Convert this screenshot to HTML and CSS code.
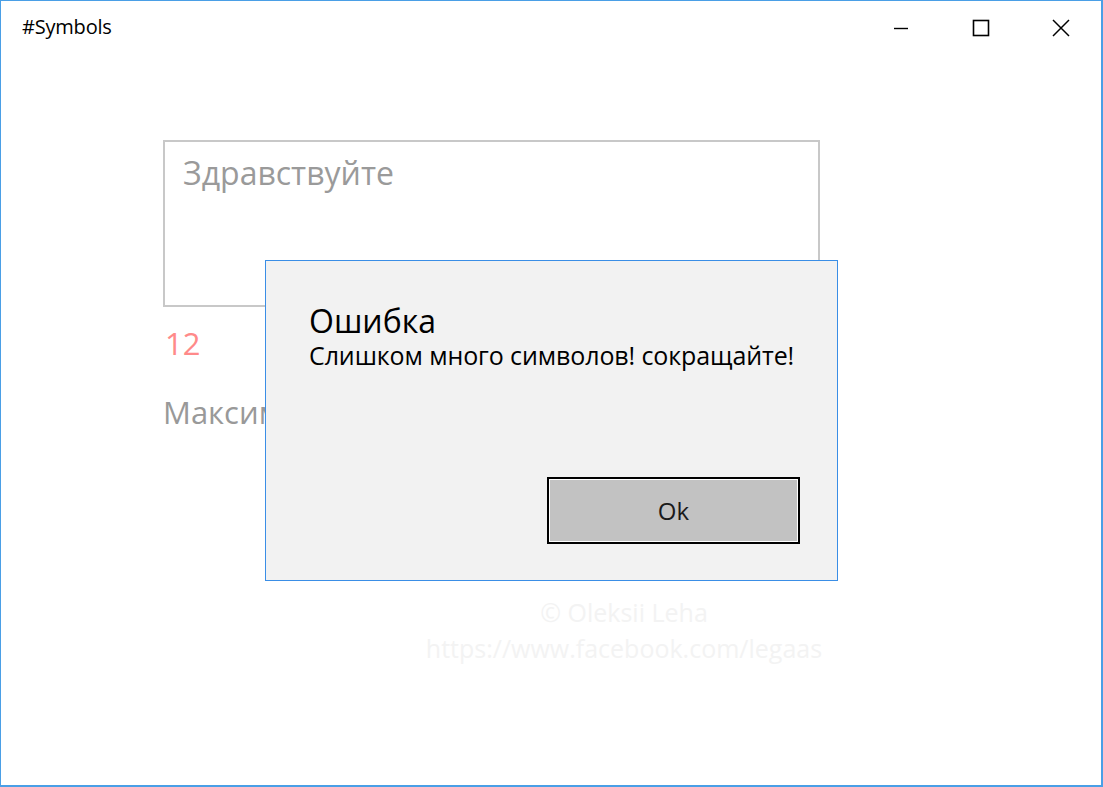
FILE: index.html
```html
<!DOCTYPE html>
<html lang="ru">
<head>
    <meta charset="UTF-8">
    <title>#Symbols</title>
    <link rel="stylesheet" href="styles.css">
</head>
<body>
    <div class="window">
        <!-- Заголовок окна -->
        <div class="titlebar">
            <span class="title">#Symbols</span>
            <div class="controls">
                <span class="ctl">
                    <svg width="16" height="16" viewBox="0 0 16 16"><path d="M1 8.5h14" stroke="#000" stroke-width="1.4" fill="none"/></svg>
                </span>
                <span class="ctl">
                    <svg width="18" height="18" viewBox="0 0 18 18"><rect x="1.5" y="1.5" width="15" height="15" stroke="#000" stroke-width="1.6" fill="none"/></svg>
                </span>
                <span class="ctl">
                    <svg width="18" height="18" viewBox="0 0 18 18"><path d="M1 1L17 17M17 1L1 17" stroke="#000" stroke-width="1.5" fill="none"/></svg>
                </span>
            </div>
        </div>

        <!-- Содержимое -->
        <div class="content">
            <div class="textbox">Здравствуйте</div>
            <div class="counter">12</div>
            <div class="max">Максимум 10 символов</div>
            <div class="credit">
                <div>© Oleksii Leha</div>
                <div>https://www.facebook.com/legaas</div>
            </div>
        </div>

        <!-- Диалог ошибки -->
        <div class="dialog">
            <div class="dlg-title">Ошибка</div>
            <div class="dlg-text">Слишком много символов! сокращайте!</div>
            <div class="dlg-actions">
                <button class="btn">Ok</button>
            </div>
        </div>
    </div>
</body>
</html>
```

FILE: styles.css
```css
html, body {
    margin: 0;
    padding: 0;
    background: #fff;
}
body {
    font-family: "Open Sans", "Noto Sans", sans-serif;
}
.window {
    position: relative;
    width: 1103px;
    height: 787px;
    box-sizing: border-box;
    border: 2px solid #4a9fe6;
    border-top-width: 1px;
    border-left-width: 1px;
    background: #fff;
    overflow: hidden;
}
.titlebar {
    height: 56px;
    display: flex;
    justify-content: space-between;
    align-items: flex-start;
}
.title {
    font-size: 20px;
    color: #000;
    margin: 12px 0 0 21px;
    letter-spacing: -0.2px;
}
.controls {
    display: flex;
}
.ctl {
    width: 80px;
    height: 56px;
    display: flex;
    align-items: center;
    justify-content: center;
}
.ctl svg {
    display: block;
    margin-top: -2px;
}
.content {
    padding: 83px 0 0 162px;
}
.textbox {
    width: 657px;
    height: 167px;
    box-sizing: border-box;
    border: 2px solid #c8c8c8;
    padding: 0 0 0 18px;
    font-size: 32px;
    color: #9a9a9a;
    line-height: 62px;
}
.counter {
    font-size: 31px;
    color: #ff8a8a;
    margin: 16px 0 0 2px;
    line-height: 40px;
}
.max {
    font-size: 31px;
    color: #999;
    margin-top: 29px;
    line-height: 40px;
}
.credit {
    width: 560px;
    margin: 162px 0 0 181px;
    text-align: center;
    color: #f3f3f3;
    font-size: 25px;
    line-height: 36px;
}
.dialog {
    position: absolute;
    left: 264px;
    top: 259px;
    width: 573px;
    height: 321px;
    box-sizing: border-box;
    border: 1px solid #3a8ee6;
    background: #f2f2f2;
    padding: 38px 0 0 43px;
    display: flex;
    flex-direction: column;
}
.dlg-title {
    font-size: 32px;
    color: #000;
    line-height: 44px;
}
.dlg-text {
    font-size: 25px;
    color: #000;
    line-height: 30px;
    margin-top: -3px;
    letter-spacing: -0.1px;
}
.dlg-actions {
    margin-top: auto;
    margin-bottom: 36px;
    display: flex;
    justify-content: flex-end;
    padding-right: 37px;
}
.btn {
    width: 253px;
    height: 67px;
    box-sizing: border-box;
    border: 2px solid #000;
    outline: 1px solid #fff;
    outline-offset: -3px;
    background: #c2c2c2;
    font-family: "Open Sans", "Noto Sans", sans-serif;
    font-size: 24px;
    color: #1a1a1a;
    padding: 0;
}
```
